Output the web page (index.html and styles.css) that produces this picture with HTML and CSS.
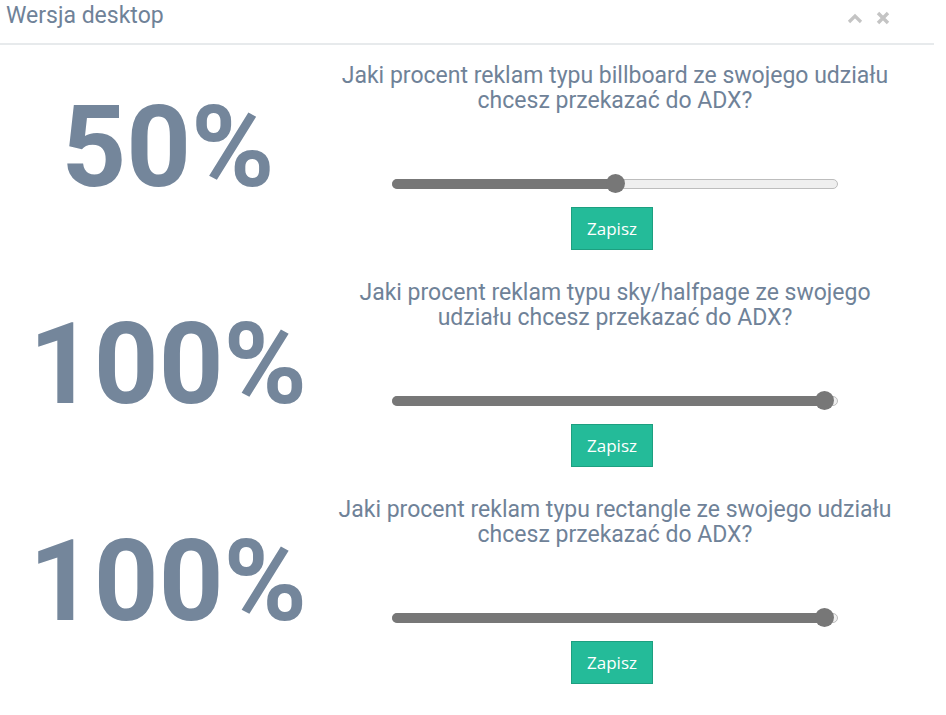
FILE: index.html
```html
<!DOCTYPE html>
<html lang="pl">
<head>
<meta charset="utf-8">
<title>Wersja desktop</title>
<link rel="stylesheet" href="styles.css">
</head>
<body>
<div class="panel">
  <div class="panel-head">
    <h5 class="panel-title">Wersja desktop</h5>
    <div class="panel-tools">
      <svg class="tool" width="16" height="16" viewBox="0 0 16 16"><path d="M2 12 L8 6 L14 12" fill="none" stroke="#c4c4c4" stroke-width="3.2"/></svg>
      <svg class="tool" width="14" height="14" viewBox="0 0 14 14"><path d="M2 2 L12 12 M12 2 L2 12" fill="none" stroke="#c4c4c4" stroke-width="3.4"/></svg>
    </div>
  </div>
  <div class="panel-body">
    <div class="row">
      <div class="big">50%</div>
      <div class="form">
        <p class="question">Jaki procent reklam typu billboard ze swojego udziału chcesz przekazać do ADX?</p>
        <div class="slider"><div class="fill" style="width:223px"></div><div class="thumb" style="left:213px"></div></div>
        <button class="btn">Zapisz</button>
      </div>
    </div>
    <div class="row">
      <div class="big">100%</div>
      <div class="form">
        <p class="question">Jaki procent reklam typu sky/halfpage ze swojego udziału chcesz przekazać do ADX?</p>
        <div class="slider"><div class="fill" style="width:432px"></div><div class="thumb" style="left:422px"></div></div>
        <button class="btn">Zapisz</button>
      </div>
    </div>
    <div class="row">
      <div class="big">100%</div>
      <div class="form">
        <p class="question">Jaki procent reklam typu rectangle ze swojego udziału chcesz przekazać do ADX?</p>
        <div class="slider"><div class="fill" style="width:432px"></div><div class="thumb" style="left:422px"></div></div>
        <button class="btn">Zapisz</button>
      </div>
    </div>
  </div>
</div>
</body>
</html>
```
FILE: styles.css
```css
html, body {
  margin: 0;
  padding: 0;
  background: #ffffff;
}
body {
  font-family: Roboto, "Liberation Sans", sans-serif;
  color: #6f8298;
}
.panel {
  width: 934px;
}
.panel-head {
  height: 43px;
  border-bottom: 2px solid #e7eaec;
  display: flex;
  align-items: flex-start;
  justify-content: space-between;
}
.panel-title {
  margin: 0;
  padding: 2px 0 0 6px;
  font-size: 23px;
  font-weight: 400;
  line-height: 28px;
  color: #6f8298;
}
.panel-tools {
  display: flex;
  align-items: center;
  gap: 13px;
  padding: 10px 44px 0 0;
}
.panel-body {
  padding-top: 18px;
}
.row {
  display: flex;
  height: 217px;
}
.big {
  width: 336px;
  text-align: center;
  font-size: 113px;
  font-weight: 700;
  color: #74869b;
  align-self: center;
  margin-bottom: 48px;
  line-height: 135px;
}
.form {
  width: 560px;
  margin-left: -1px;
  display: flex;
  flex-direction: column;
  align-items: center;
}
.question {
  margin: 0;
  font-size: 23px;
  font-weight: 400;
  line-height: 25px;
  text-align: center;
  color: #6f8298;
}
.slider {
  position: relative;
  width: 444px;
  height: 8px;
  margin-top: 66px;
  border: 1px solid #bdbdbd;
  border-radius: 6px;
  background: #efefef;
}
.fill {
  position: absolute;
  left: -1px;
  top: -1px;
  height: 10px;
  border-radius: 6px 0 0 6px;
  background: #777777;
}
.thumb {
  position: absolute;
  top: -6px;
  width: 19px;
  height: 19px;
  border-radius: 50%;
  background: #777777;
}
.btn {
  margin-top: 18px;
  width: 82px;
  height: 43px;
  border: 1px solid #1d9f80;
  background: #24bb99;
  color: #ffffff;
  font-family: "Open Sans", sans-serif;
  font-size: 17px;
  font-weight: 400;
  padding: 0;
  margin-left: -6px;
}
```
